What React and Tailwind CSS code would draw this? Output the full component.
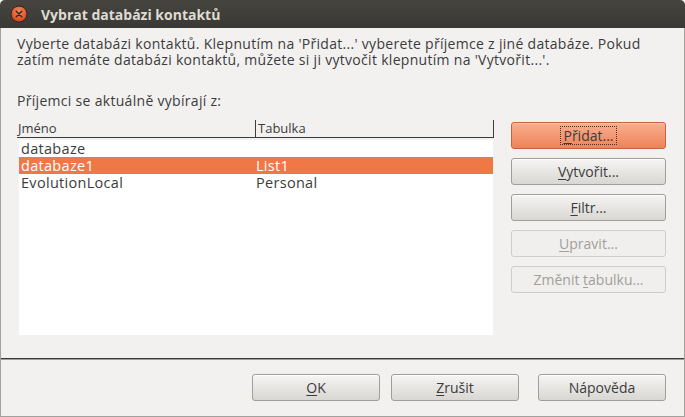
import React from 'react';

const font = {fontFamily: '"Open Sans", "Noto Sans", "DejaVu Sans", sans-serif'};

function Btn({children, variant = 'normal', className = ''}) {
    const styles = {
        normal: 'border-[#a09e99] bg-gradient-to-b from-[#f6f5f4] to-[#d9d7d3] text-[#3c3c3c] shadow-[inset_0_1px_0_#ffffff]',
        active: 'border-[#c4643d] bg-gradient-to-b from-[#f9ae8f] to-[#ed8357] text-[#3c3c3c] shadow-[inset_0_1px_0_#fbc4ad]',
        disabled: 'border-[#cfcdc9] bg-[#f0efed] text-[#a19f9b]',
    };
    return (
        <div className={`h-[27px] rounded-[3px] border flex items-center justify-center text-[14px] ${styles[variant]} ${className}`}>
            {children}
        </div>
    );
}

function U({children}) {
    return <span className="underline underline-offset-[2px] decoration-1">{children}</span>;
}

const rows = [
    {name: 'databaze', table: ''},
    {name: 'databaze1', table: 'List1', selected: true},
    {name: 'EvolutionLocal', table: 'Personal'},
];

export default function App() {
    return (
        <div className="w-[685px] h-[417px] flex flex-col bg-[#f2f1f0]" style={font}>
            {/* title bar */}
            <div className="h-[28px] shrink-0 rounded-t-[5px] bg-gradient-to-b from-[#45443f] to-[#3a3935] flex items-center px-[10px] gap-[13px]">
                <svg width="18" height="18" viewBox="0 0 18 18">
                    <defs>
                        <radialGradient id="cb" cx="50%" cy="35%" r="60%">
                            <stop offset="0%" stopColor="#f68b60"/>
                            <stop offset="100%" stopColor="#d9471a"/>
                        </radialGradient>
                    </defs>
                    <circle cx="9" cy="9" r="8" fill="url(#cb)" stroke="#2a2925" strokeWidth="1"/>
                    <path d="M6.3 6.3 L11.7 11.7 M11.7 6.3 L6.3 11.7" stroke="#3a2a22" strokeWidth="1.6" strokeLinecap="round"/>
                </svg>
                <span className="text-[14px] font-bold text-[#dfdbd2]">Vybrat databázi kontaktů</span>
            </div>

            {/* body */}
            <div className="flex-1 flex flex-col border-x border-b border-[#a3a19c]">
                <div className="h-[330px] shrink-0 pl-[16px] pr-[12px] pt-[8px] text-[#3c3c3c]">
                    <p className="text-[14px] leading-[16px] tracking-[0.3px]">
                        Vyberte databázi kontaktů. Klepnutím na 'Přidat...' vyberete příjemce z jiné databáze. Pokud
                        <br/>
                        zatím nemáte databázi kontaktů, můžete si ji vytvočit klepnutím na 'Vytvořit...'.
                    </p>
                    <p className="mt-[25px] text-[14px] leading-[16px] tracking-[0.3px]">Příjemci se aktuálně vybírají z:</p>

                    <div className="mt-[11px] flex">
                        {/* list */}
                        <div className="w-[477px] flex flex-col">
                            <div className="h-[18px] flex border-b border-r border-[#3c3c3c] text-[13px] leading-[16px]">
                                <div className="w-[239px] pl-[1px] border-r border-[#3c3c3c]">Jméno</div>
                                <div className="pl-[2px]">Tabulka</div>
                            </div>
                            <div className="ml-[2px] mr-[1px] mt-[2px] h-[195px] bg-white">
                                {rows.map((r) => (
                                    <div key={r.name}
                                         className={`h-[17px] flex text-[14.5px] leading-[17px] tracking-[0.3px] ${r.selected ? 'bg-[#f07746] text-white' : 'text-[#3c3c3c]'}`}>
                                        <div className="w-[237px] pl-[2px]">{r.name}</div>
                                        <div>{r.table}</div>
                                    </div>
                                ))}
                            </div>
                        </div>

                        {/* side buttons */}
                        <div className="ml-[17px] mt-[2px] w-[155px] flex flex-col gap-[9px]">
                            <Btn variant="active">
                                <span className="px-[2px] leading-[17px] outline-1 outline-dotted outline-[#4a3328]"><U>P</U>řidat...</span>
                            </Btn>
                            <Btn><span><U>V</U>ytvořit...</span></Btn>
                            <Btn><span><U>F</U>iltr...</span></Btn>
                            <Btn variant="disabled"><span><U>U</U>pravit...</span></Btn>
                            <Btn variant="disabled"><span>Změnit <U>t</U>abulku...</span></Btn>
                        </div>
                    </div>
                </div>

                {/* separator */}
                <div className="h-[1px] bg-[#3c3b39]"/>
                <div className="h-[1px] bg-[#9e9c98]"/>

                {/* footer buttons */}
                <div className="flex justify-end pt-[14px] pr-[18px]">
                    <Btn className="w-[128px]"><U>O</U>K</Btn>
                    <Btn className="w-[128px] ml-[11px]"><U>Z</U>rušit</Btn>
                    <Btn className="w-[128px] ml-[19px]">Nápověda</Btn>
                </div>
            </div>
        </div>
    );
}
